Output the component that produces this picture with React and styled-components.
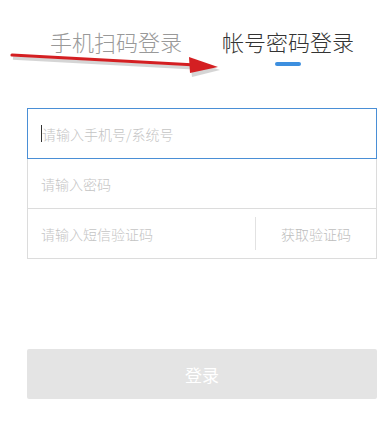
import React from "react";
import styled, { createGlobalStyle } from "styled-components";

const Global = createGlobalStyle`
  html, body { margin: 0; padding: 0; background: #fff; }
  body { font-family: "Noto Sans CJK SC", "Noto Sans", sans-serif; }
`;

const Page = styled.div`
  position: relative;
  width: 392px;
  height: 428px;
  overflow: hidden;
  padding: 30px 16px 0 27px;
  box-sizing: border-box;
`;

const Panel = styled.div`
  width: 350px;
  display: flex;
  flex-direction: column;
`;

const Tabs = styled.div`
  display: flex;
  justify-content: center;
  gap: 40px;
`;

const Tab = styled.div`
  display: flex;
  flex-direction: column;
  align-items: center;
  gap: 10px;
  font-size: 22px;
  line-height: 22px;
  font-weight: 300;
  color: ${(p) => (p.$active ? "#333" : "#999")};
`;

const Indicator = styled.span`
  width: 26px;
  height: 4px;
  border-radius: 2px;
  background: ${(p) => (p.$show ? "#3d8fdf" : "transparent")};
`;

const Form = styled.div`
  margin-top: 42px;
  display: flex;
  flex-direction: column;
`;

const Field = styled.div`
  position: relative;
  z-index: ${(p) => (p.$focused ? 1 : 0)};
  height: 51px;
  box-sizing: border-box;
  border: 1px solid ${(p) => (p.$focused ? "#4a8fd6" : "#dcdcdc")};
  margin-top: ${(p) => (p.$first ? "0" : "-1px")};
  display: flex;
  align-items: center;
`;

const Placeholder = styled.div`
  flex: 1;
  padding-left: 13px;
  font-size: 14px;
  font-weight: 300;
  color: #c4c4c4;
  display: flex;
  align-items: center;
`;

const Caret = styled.span`
  display: inline-block;
  width: 1px;
  height: 17px;
  background: #333;
`;

const Divider = styled.span`
  width: 1px;
  height: 33px;
  background: #e2e2e2;
`;

const CodeButton = styled.div`
  width: 120px;
  text-align: center;
  font-size: 14px;
  font-weight: 300;
  color: #bdbdbd;
`;

const Submit = styled.div`
  margin-top: 90px;
  height: 50px;
  border-radius: 2px;
  background: #e4e4e4;
  color: #fff;
  font-size: 17px;
  display: flex;
  align-items: center;
  justify-content: center;
`;

const Arrow = styled.svg`
  position: absolute;
  left: 0;
  top: 0;
  pointer-events: none;
`;

export default function App() {
  return (
    <>
      <Global />
      <Page>
        <Panel>
          <Tabs>
            <Tab>
              手机扫码登录
              <Indicator />
            </Tab>
            <Tab $active>
              帐号密码登录
              <Indicator $show />
            </Tab>
          </Tabs>
          <Form>
            <Field $first $focused>
              <Placeholder>
                <Caret />
                请输入手机号/系统号
              </Placeholder>
            </Field>
            <Field>
              <Placeholder>请输入密码</Placeholder>
            </Field>
            <Field>
              <Placeholder>请输入短信验证码</Placeholder>
              <Divider />
              <CodeButton>获取验证码</CodeButton>
            </Field>
          </Form>
          <Submit>登录</Submit>
        </Panel>
        <Arrow width="240" height="90" viewBox="0 0 240 90">
          <g opacity="0.3" fill="#777" stroke="#777">
            <line x1="13" y1="58" x2="198" y2="68" strokeWidth="3.5" />
            <polygon points="190,60 220,70 192,77" stroke="none" />
          </g>
          <line x1="12" y1="55" x2="196" y2="65" stroke="#d41f22" strokeWidth="3.2" strokeLinecap="round" />
          <polygon points="189,57 218,67 190,73" fill="#d41f22" />
        </Arrow>
      </Page>
    </>
  );
}
